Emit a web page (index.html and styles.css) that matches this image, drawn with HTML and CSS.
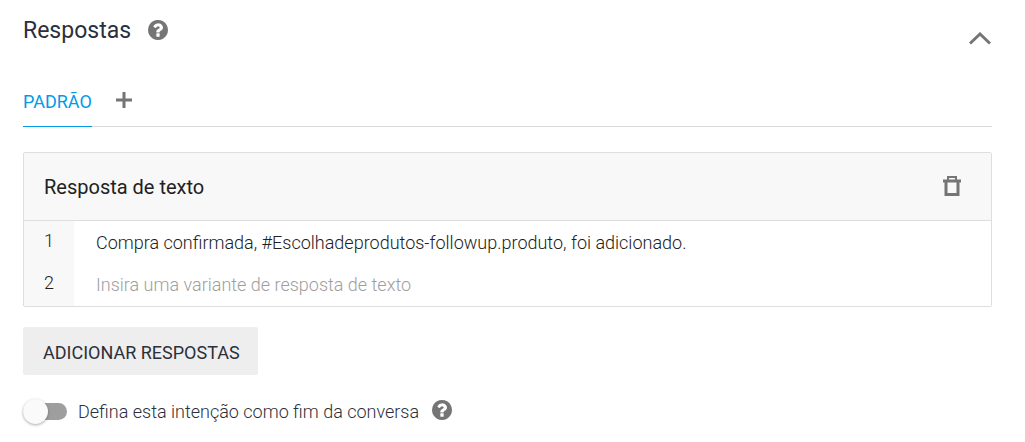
FILE: index.html
```html
<!DOCTYPE html>
<html lang="pt-BR">
<head>
<meta charset="utf-8">
<title>Respostas</title>
<link rel="stylesheet" href="styles.css">
</head>
<body>
<svg class="sprite" aria-hidden="true">
  <symbol id="help" viewBox="128 128 1536 1536">
    <path d="M1024 1376v-192q0-14-9-23t-23-9h-192q-14 0-23 9t-9 23v192q0 14 9 23t23 9h192q14 0 23-9t9-23zm256-672q0-88-55.500-163t-138.500-116-170-41q-243 0-371 213-15 24 8 42l132 100q7 6 19 6 16 0 25-12 53-68 86-92 34-24 86-24 48 0 85.500 26t37.500 59q0 38-20 61t-68 45q-63 28-115.500 86.500t-52.500 125.500v36q0 14 9 23t23 9h192q14 0 23-9t9-23q0-19 21.500-49.500t54.500-49.500q32-18 49-28.500t46-35 44.500-48 28-60.500 12.500-81zm384 192q0 209-103 385.500t-279.500 279.500-385.500 103-385.500-103-279.500-279.500-103-385.500 103-385.500 279.500-279.500 385.500-103 385.500 103 279.500 279.500 103 385.500z"/>
  </symbol>
</svg>
<main class="responses">
  <header class="heading">
    <h1 class="title">Respostas</h1>
    <button class="icon-button" type="button" aria-label="Ajuda sobre respostas"><svg class="help-icon"><use href="#help"/></svg></button>
    <button class="icon-button collapse" type="button" aria-label="Recolher">
      <svg class="chevron" viewBox="0 0 22 13"><path d="M1 11.500 11 2 21 11.500"/></svg>
    </button>
  </header>

  <div class="tabs">
    <button class="tab" type="button" aria-pressed="true">PADRÃO</button>
    <button class="icon-button" type="button" aria-label="Adicionar aba">
      <svg class="plus" viewBox="0 0 16 16"><path d="M8 0v16M0 8h16"/></svg>
    </button>
  </div>

  <section class="card">
    <header class="card-header">
      <h2 class="card-title">Resposta de texto</h2>
      <button class="icon-button" type="button" aria-label="Excluir resposta">
        <svg class="trash" viewBox="0 0 18 21"><path class="lid" d="M5 5V1h8v4"/><path d="M0 5h18M3 5v13.500h12V5"/></svg>
      </button>
    </header>
    <div class="variants">
      <div class="variant">
        <label class="number" for="variant-1">1</label>
        <input class="field" id="variant-1" type="text" value="Compra confirmada, #Escolhadeprodutos-followup.produto, foi adicionado.">
      </div>
      <div class="variant">
        <label class="number" for="variant-2">2</label>
        <input class="field" id="variant-2" type="text" placeholder="Insira uma variante de resposta de texto">
      </div>
    </div>
  </section>

  <button class="add" type="button">ADICIONAR RESPOSTAS</button>

  <div class="end-row">
    <label class="switch-label"><input class="switch" type="checkbox" role="switch">Defina esta intenção como fim da conversa</label>
    <button class="icon-button" type="button" aria-label="Ajuda sobre fim da conversa"><svg class="help-icon"><use href="#help"/></svg></button>
  </div>
</main>
</body>
</html>
```
FILE: styles.css
```css
* { box-sizing: border-box; }

body {
  margin: 0;
  background: #fff;
  color: #2b303b;
  font-family: Roboto, sans-serif;
  font-size: 18px;
}

button, input { font: inherit; }
button { cursor: pointer; }
.sprite { display: none; }

.responses { padding: 14px 33px 14px 23px; }

.heading {
  display: flex;
  align-items: center;
  height: 32px;
}

.title {
  margin: 0 17px 0 0;
  font-size: 23px;
  font-weight: 400;
}

.icon-button {
  display: flex;
  padding: 0;
  border: 0;
  background: none;
  color: #757575;
}

.help-icon { width: 20px; height: 20px; fill: currentColor; }
.chevron, .plus, .trash { fill: none; stroke: currentColor; stroke-width: 3px; }
.chevron { width: 22px; height: 13px; }
.plus { width: 16px; height: 16px; }
.trash { width: 18px; height: 21px; }
.lid { stroke-width: 2px; }

.collapse {
  align-self: flex-end;
  margin: 0 1px 1px auto;
}

.tabs {
  display: flex;
  align-items: center;
  gap: 24px;
  height: 54px;
  margin-top: 27px;
  box-shadow: inset 0 -1px #d9d9d9;
}

.tab {
  height: 54px;
  padding: 4px 0 0;
  border: 0;
  border-bottom: 1px solid #039be5;
  background: none;
  color: #039be5;
}

.card {
  margin-top: 25px;
  border: 1px solid #dedede;
  border-radius: 2px;
}

.card-header {
  display: flex;
  align-items: center;
  justify-content: space-between;
  height: 68px;
  padding: 0 30px 0 20px;
  border-bottom: 1px solid #dedede;
  background: #f8f8f8;
}

.card-title {
  margin: 0;
  color: #212121;
  font-size: 20px;
  font-weight: 400;
}

.variants {
  padding-bottom: 1px;
  background: linear-gradient(to right, #f8f8f8 50px, #fff 50px);
}

.variant { display: flex; height: 42px; }

.number {
  width: 50px;
  padding-left: 20px;
  color: #212121;
  font-weight: 300;
  line-height: 40px;
}

.field {
  flex: 1;
  min-width: 0;
  padding: 0 22px;
  border: 0;
  outline: 0;
  background: none;
  color: #212121;
  font-weight: 300;
}

.field::placeholder { color: #9e9e9e; opacity: 1; }

.add {
  height: 48px;
  margin-top: 20px;
  padding: 3px 18px 0 20px;
  border: 0;
  border-radius: 2px;
  background: #eee;
  color: #2b303b;
}

.end-row {
  display: flex;
  align-items: center;
  gap: 13px;
  height: 28px;
  margin-top: 21px;
}

.switch-label {
  display: flex;
  align-items: center;
  gap: 11px;
  padding-top: 2px;
  font-weight: 300;
}

.switch {
  display: flex;
  align-items: center;
  appearance: none;
  width: 44px;
  height: 17px;
  margin: 0;
  border-radius: 9px;
  background: #9e9e9e;
}

.switch::before {
  content: "";
  width: 25px;
  height: 25px;
  flex: none;
  border-radius: 50%;
  background: #fafafa;
  box-shadow: 0 1px 3px #0005;
}

.switch:checked { justify-content: flex-end; }
```
